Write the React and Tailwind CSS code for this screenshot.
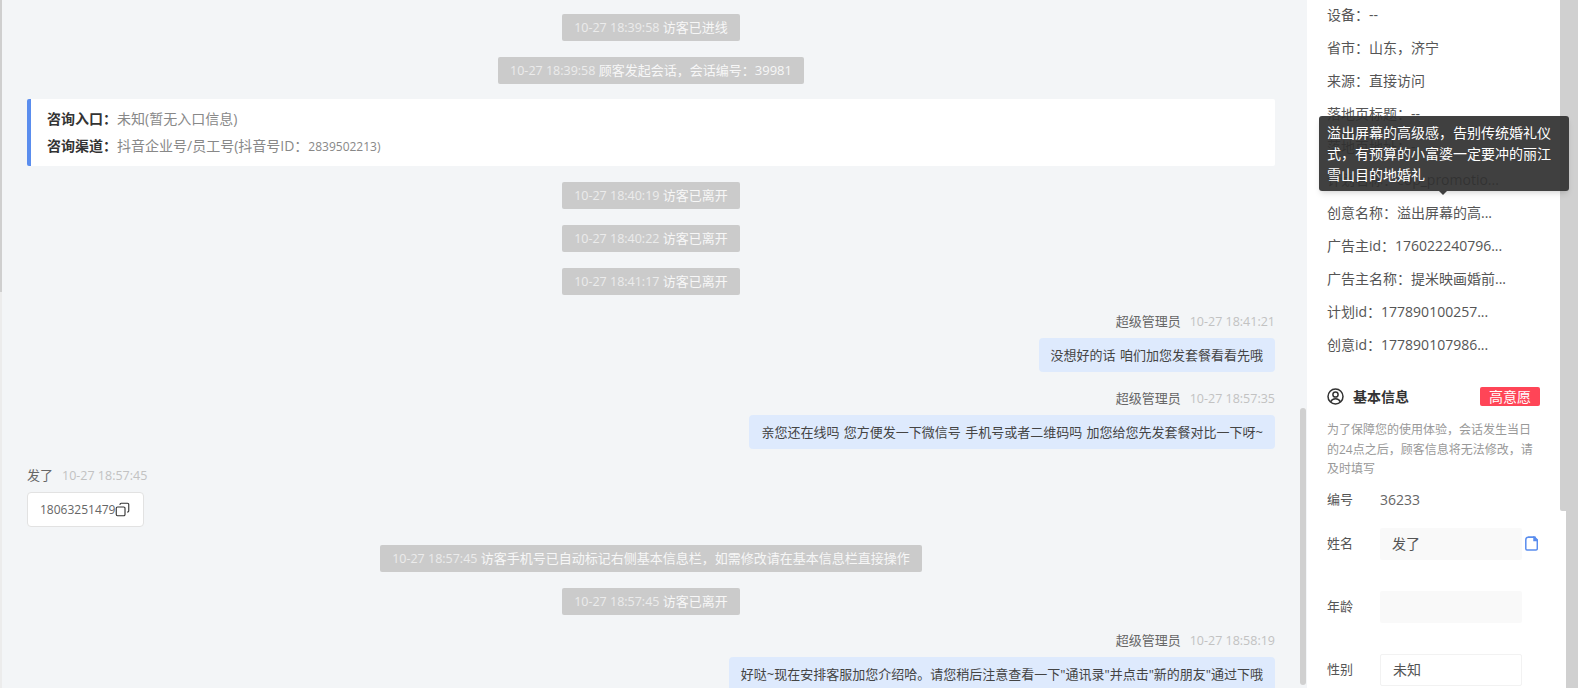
import { Copy } from "lucide-react";

const infoRows = [
  "设备：--",
  "省市：山东，济宁",
  "来源：直接访问",
  "落地页标题：--",
  "落地页地址：--",
  "计划名称：cop_promotio...",
  "创意名称：溢出屏幕的高...",
  "广告主id：176022240796...",
  "广告主名称：提米映画婚前...",
  "计划id：177890100257...",
  "创意id：177890107986...",
];

// system notice in the middle of the chat
function Pill({ time, text, className = "" }) {
  return (
    <div className={`shrink-0 self-center h-[27px] leading-[27px] px-3 rounded-[2px] bg-[#cbcbcb] text-[13px] text-[#f7f7f7] whitespace-nowrap ${className}`}>
      <span className="text-[12.5px] text-[#ececec]">{time}</span> {text}
    </div>
  );
}

function MsgHead({ name, time, right }) {
  return (
    <div className={`flex items-center h-5 gap-[9px] text-[13px] text-[#666] ${right ? "justify-end" : ""}`}>
      <span>{name}</span>
      <span className="text-[12.5px] text-[#c2c2c2]">{time}</span>
    </div>
  );
}

function Bubble({ children, className = "" }) {
  return (
    <div className={`self-end mt-[6px] px-3 rounded-[4px] bg-[#deeafd] text-[13px] text-[#444] whitespace-nowrap [word-spacing:1px] ${className}`}>
      {children}
    </div>
  );
}

export default function App() {
  return (
    <div className="relative flex h-[688px] w-[1578px] overflow-hidden bg-white font-['Open_Sans','Noto_Sans_CJK_SC',sans-serif]">
      {/* left edge */}
      <div className="w-[2px] shrink-0 bg-[#ececec]">
        <div className="h-[292px] bg-[#cfcfcf]" />
      </div>

      {/* chat */}
      <div className="relative flex flex-col w-[1305px] shrink-0 pt-[14px] pl-[25px] pr-[32px] bg-[#f3f5f7]">
        <Pill time="10-27 18:39:58" text="访客已进线" />
        <Pill time="10-27 18:39:58" text="顾客发起会话，会话编号：39981" className="mt-4" />

        <div className="shrink-0 mt-[15px] h-[67px] pt-[6px] pl-4 border-l-4 border-[#5a8dee] bg-white text-[14px] leading-[27px] rounded-[2px]">
          <div>
            <span className="font-bold text-[#333]">咨询入口：</span>
            <span className="text-[#888]">未知(暂无入口信息)</span>
          </div>
          <div>
            <span className="font-bold text-[#333]">咨询渠道：</span>
            <span className="text-[#888]">抖音企业号/员工号(抖音号ID：<span className="text-[12px]">2839502213)</span></span>
          </div>
        </div>

        <Pill time="10-27 18:40:19" text="访客已离开" className="mt-4" />
        <Pill time="10-27 18:40:22" text="访客已离开" className="mt-4" />
        <Pill time="10-27 18:41:17" text="访客已离开" className="mt-4" />

        <div className="shrink-0 mt-[17px] flex flex-col">
          <MsgHead name="超级管理员" time="10-27 18:41:21" right />
          <Bubble className="h-[34px] leading-[34px]">没想好的话 咱们加您发套餐看看先哦</Bubble>
        </div>
        <div className="shrink-0 mt-[17px] flex flex-col">
          <MsgHead name="超级管理员" time="10-27 18:57:35" right />
          <Bubble className="h-[34px] leading-[34px]">亲您还在线吗 您方便发一下微信号 手机号或者二维码吗 加您给您先发套餐对比一下呀~</Bubble>
        </div>

        <div className="shrink-0 mt-[17px] flex flex-col items-start">
          <MsgHead name="发了" time="10-27 18:57:45" />
          <div className="mt-[6px] flex items-center h-[35px] w-[117px] pl-[12px] bg-white border border-[#e2e2e2] rounded-[4px] text-[12px] text-[#666]">
            18063251479
            <Copy size={15} strokeWidth={1.8} className="-scale-x-100 text-[#333]" />
          </div>
        </div>

        <Pill time="10-27 18:57:45" text="访客手机号已自动标记右侧基本信息栏，如需修改请在基本信息栏直接操作" className="mt-[18px]" />
        <Pill time="10-27 18:57:45" text="访客已离开" className="mt-4" />

        <div className="shrink-0 mt-4 flex flex-col">
          <MsgHead name="超级管理员" time="10-27 18:58:19" right />
          <Bubble className="h-[34px] leading-[34px]">好哒~现在安排客服加您介绍哈。请您稍后注意查看一下"通讯录"并点击"新的朋友"通过下哦</Bubble>
        </div>

        <div className="absolute right-[1px] top-[408px] h-[277px] w-[6px] rounded-[3px] bg-[#d0d0d0]" />
      </div>

      {/* visitor info */}
      <div className="w-[259px] shrink-0 pl-5 pr-[26px] bg-white">
        <div className="-mt-[2px]">
          {infoRows.map((row) => (
            <div key={row} className="h-[33px] leading-[33px] text-[14px] text-[#555] whitespace-nowrap">
              {row}
            </div>
          ))}
        </div>

        <div className="mt-[26px] flex items-center justify-between h-[19px]">
          <div className="flex items-center gap-[9px] text-[14px] font-bold text-[#333]">
            <svg width="17" height="17" viewBox="0 0 17 17" fill="none" stroke="#333" strokeWidth="1.5">
              <circle cx="8.5" cy="8.5" r="7.5" />
              <circle cx="8.5" cy="6.5" r="2.6" />
              <path d="M3.6 14c.9-2.2 2.7-3.2 4.9-3.2s4 1 4.9 3.2" />
            </svg>
            基本信息
          </div>
          <div className="w-[60px] h-[19px] leading-[19px] rounded-[2px] bg-[#ff4557] text-center text-[14px] text-white">高意愿</div>
        </div>

        <p className="mt-[14px] text-[12px] leading-[19.5px] text-[#999]">
          为了保障您的使用体验，会话发生当日的24点之后，顾客信息将无法修改，请及时填写
        </p>

        <div className="mt-[11px] flex items-center h-5 text-[14px]">
          <span className="w-[53px] text-[13px] text-[#555]">编号</span>
          <span className="text-[#666]">36233</span>
        </div>

        <div className="mt-[18px] flex items-center text-[13px] text-[#555]">
          <span className="w-[53px]">姓名</span>
          <div className="w-[142px] h-8 leading-8 pl-3 rounded-[2px] bg-[#f9f9f9] text-[14px]">发了</div>
          <svg width="13" height="15" viewBox="0 0 13 15" fill="none" stroke="#5a8dee" strokeWidth="1.5" className="ml-[3px]">
            <path d="M3 1.2h6.5l2.8 2.6v9a1.2 1.2 0 0 1-1.2 1.2H2a1.2 1.2 0 0 1-1.2-1.2V4" />
            <path d="M.8 4c0-1.6 1-2.8 2.2-2.8h7v3h2.3" />
            <path d="M9 1.5l3 3H9z" fill="#5a8dee" />
          </svg>
        </div>

        <div className="mt-[31px] flex items-center text-[13px] text-[#555]">
          <span className="w-[53px]">年龄</span>
          <div className="w-[142px] h-8 rounded-[2px] bg-[#f9f9f9]" />
        </div>

        <div className="mt-[31px] flex items-center text-[13px] text-[#555]">
          <span className="w-[53px]">性别</span>
          <div className="w-[142px] h-8 leading-[30px] pl-3 rounded-[2px] border border-[#f2f2f2] bg-white text-[14px]">未知</div>
        </div>
      </div>

      {/* page gutter */}
      <div className="flex-1 bg-[#d0d0d0]" />
      <div className="absolute right-0 top-0 h-[511px] w-[18px] rounded-bl-[2px] bg-[#d0d0d0]" />

      {/* tooltip */}
      <div className="absolute left-[1319px] top-[116px] w-[250px] h-[75px] py-[6px] pl-2 pr-2 rounded-[3px] bg-[rgba(48,48,48,0.92)] text-[14px] leading-[21px] text-white shadow-md">
        溢出屏幕的高级感，告别传统婚礼仪式，有预算的小富婆一定要冲的丽江雪山目的地婚礼
        <div className="absolute left-[120px] -bottom-[4px] w-0 h-0 border-x-[4px] border-t-[4px] border-x-transparent border-t-[rgba(48,48,48,0.92)]" />
      </div>
    </div>
  );
}
